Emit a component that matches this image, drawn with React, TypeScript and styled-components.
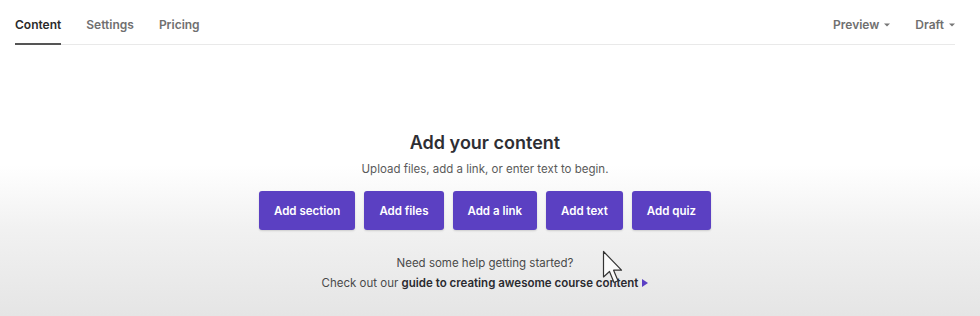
import styled, { createGlobalStyle } from "styled-components";

const GlobalStyle = createGlobalStyle`
  body {
    margin: 0;
    font-family: Inter, "Noto Sans", sans-serif;
  }
`;

const tabs = ["Content", "Settings", "Pricing"];
const menus = ["Preview", "Draft"];
const actions = ["Add section", "Add files", "Add a link", "Add text", "Add quiz"];

const Wrapper = styled.div`
  position: relative;
  height: 316px;
  overflow: hidden;
  background: linear-gradient(
    to bottom,
    #ffffff 0px,
    #ffffff 165px,
    #f1f1f1 230px,
    #e5e5e5 316px
  );
`;

const TabBar = styled.div`
  display: flex;
  justify-content: space-between;
  align-items: stretch;
  height: 44px;
  margin: 0 25px 0 15px;
  border-bottom: 1px solid #e9e9e9;
`;

const TabGroup = styled.div`
  display: flex;
  gap: 25px;
`;

const Tab = styled.div<{ $active?: boolean }>`
  display: flex;
  align-items: center;
  padding-top: 5px;
  margin-bottom: -1px;
  font-size: 12px;
  font-weight: 600;
  color: ${(p) => (p.$active ? "#2b2b2b" : "#707070")};
  border-bottom: 2px solid ${(p) => (p.$active ? "#555" : "transparent")};
`;

const Menu = styled.div`
  display: flex;
  align-items: center;
  gap: 5px;
  padding-top: 5px;
  font-size: 12px;
  font-weight: 600;
  color: #707070;
`;

const Main = styled.div`
  display: flex;
  flex-direction: column;
  align-items: center;
  padding-top: 87px;
  padding-right: 10px;
`;

const Title = styled.h1`
  margin: 0;
  font-size: 18px;
  line-height: 22px;
  font-weight: 600;
  color: #2e2e33;
`;

const Subtitle = styled.p`
  margin: 7px 0 0;
  font-size: 11.5px;
  line-height: 16px;
  color: #5a5a5a;
`;

const Buttons = styled.div`
  display: flex;
  gap: 9px;
  margin-top: 14px;
`;

const ActionButton = styled.button`
  height: 39px;
  padding: 0 15px;
  border: none;
  border-radius: 3px;
  background: #5b40c2;
  color: #fff;
  font-family: inherit;
  font-size: 11.5px;
  font-weight: 600;
  box-shadow: 0 1px 2px rgba(0, 0, 0, 0.15);
`;

const Help = styled.p`
  margin: 25px 0 0;
  font-size: 11.5px;
  line-height: 16px;
  color: #4a4a4a;
`;

const Guide = styled.p`
  display: flex;
  align-items: center;
  margin: 4px 0 0;
  font-size: 11.5px;
  line-height: 16px;
  color: #4a4a4a;
  white-space: pre;

  b {
    font-weight: 600;
    color: #2b2b30;
  }
`;

const Arrow = styled.span`
  display: inline-flex;
  margin-left: 4px;
`;

const Cursor = styled.svg`
  position: absolute;
  left: 602px;
  top: 250px;
`;

const Caret = () => (
  <svg width="6" height="4" viewBox="0 0 6 4">
    <path d="M0 0.5 L6 0.5 L3 3.5 Z" fill="#777" />
  </svg>
);

const Pointer = () => (
  <Cursor width="22" height="36" viewBox="0 0 22 36">
    <path
      d="M1.5 1.5 L1.5 27 L7.5 21.5 L12 32.5 L16 30.8 L11.6 20.2 L19.5 20.2 Z"
      fill="#fafafa"
      stroke="#333"
      strokeWidth="1.2"
      strokeLinejoin="round"
    />
  </Cursor>
);

export default function App() {
  return (
    <Wrapper>
      <GlobalStyle />
      <TabBar>
        <TabGroup>
          {tabs.map((t, i) => (
            <Tab key={t} $active={i === 0}>{t}</Tab>
          ))}
        </TabGroup>
        <TabGroup>
          {menus.map((m) => (
            <Menu key={m}>
              {m}
              <Caret />
            </Menu>
          ))}
        </TabGroup>
      </TabBar>
      <Main>
        <Title>Add your content</Title>
        <Subtitle>Upload files, add a link, or enter text to begin.</Subtitle>
        <Buttons>
          {actions.map((a) => (
            <ActionButton key={a}>{a}</ActionButton>
          ))}
        </Buttons>
        <Help>Need some help getting started?</Help>
        <Guide>
          Check out our <b>guide to creating awesome course content</b>
          <Arrow>
            <svg width="6" height="8" viewBox="0 0 6 8">
              <path d="M0 0 L6 4 L0 8 Z" fill="#5b3fc4" />
            </svg>
          </Arrow>
        </Guide>
      </Main>
      <Pointer />
    </Wrapper>
  );
}
